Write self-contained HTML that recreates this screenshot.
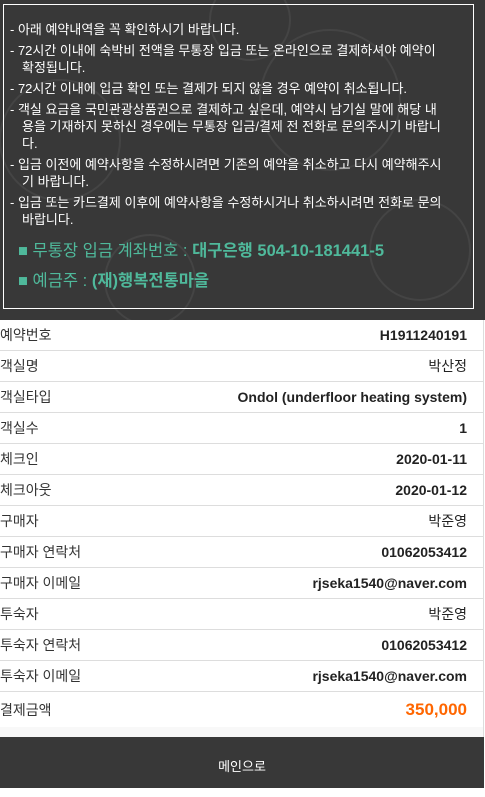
<!DOCTYPE html>
<html><head><meta charset="utf-8"><style>
*{margin:0;padding:0;box-sizing:border-box}
body{width:485px;height:788px;overflow:hidden;background:#fff;font-family:"Liberation Sans","Noto Sans CJK KR",sans-serif}
.top{position:absolute;left:0;top:0;width:485px;height:320px;background:#383838;overflow:hidden}
.box{position:absolute;left:3px;top:4px;width:471px;height:305px;border:1px solid #fff}
ul{list-style:none;position:absolute;left:10px;top:21px;width:436px;color:#fff;font-size:13px;line-height:17px}
li{padding-left:12px;text-indent:-12px;margin-bottom:4px}
.acc{position:absolute;left:18px;color:#4fb99b;font-size:16.5px}
.acc b{font-weight:bold}
.rows{position:absolute;left:0;top:320px;width:484px;border-right:1px solid #ddd}
.r{height:31px;border-bottom:1px solid #ddd;display:flex;justify-content:space-between;align-items:center;padding:0 16px 0 0;font-size:14px;color:#333}
.r b{font-weight:bold;font-size:14px;color:#222}
.r b.k{font-weight:normal}
.last{height:35px;border-bottom:none}
.last b{color:#f60;font-size:17px}
.gap{height:11px;background:#f8f8f8}
.btn{position:absolute;left:0;top:737px;width:484px;height:51px;background:#383838;color:#fff;font-size:13px;text-align:center;line-height:60px}
</style></head><body>
<div class="top">
<svg width="485" height="320" style="position:absolute;left:0;top:0" fill="none" stroke="#444" stroke-width="2">
<circle cx="60" cy="140" r="60"/><circle cx="330" cy="100" r="70"/><circle cx="420" cy="250" r="50"/><circle cx="150" cy="280" r="45"/><circle cx="250" cy="20" r="40"/>
</svg>
<div class="box"></div>
<ul>
<li>- 아래 예약내역을 꼭 확인하시기 바랍니다.</li>
<li>- 72시간 이내에 숙박비 전액을 무통장 입금 또는 온라인으로 결제하셔야 예약이 확정됩니다.</li>
<li>- 72시간 이내에 입금 확인 또는 결제가 되지 않을 경우 예약이 취소됩니다.</li>
<li>- 객실 요금을 국민관광상품권으로 결제하고 싶은데, 예약시 남기실 말에 해당 내용을 기재하지 못하신 경우에는 무통장 입금/결제 전 전화로 문의주시기 바랍니다.</li>
<li>- 입금 이전에 예약사항을 수정하시려면 기존의 예약을 취소하고 다시 예약해주시기 바랍니다.</li>
<li>- 입금 또는 카드결제 이후에 예약사항을 수정하시거나 취소하시려면 전화로 문의바랍니다.</li>
</ul>
<div class="acc" style="top:237px">■ 무통장 입금 계좌번호 : <b>대구은행 504-10-181441-5</b></div>
<div class="acc" style="top:267px">■ 예금주 : <b>(재)행복전통마을</b></div>
</div>
<div class="rows">
<div class="r"><span>예약번호</span><b>H1911240191</b></div>
<div class="r"><span>객실명</span><b class="k">박산정</b></div>
<div class="r"><span>객실타입</span><b>Ondol (underfloor heating system)</b></div>
<div class="r"><span>객실수</span><b>1</b></div>
<div class="r"><span>체크인</span><b>2020-01-11</b></div>
<div class="r"><span>체크아웃</span><b>2020-01-12</b></div>
<div class="r"><span>구매자</span><b class="k">박준영</b></div>
<div class="r"><span>구매자 연락처</span><b>01062053412</b></div>
<div class="r"><span>구매자 이메일</span><b>rjseka1540@naver.com</b></div>
<div class="r"><span>투숙자</span><b class="k">박준영</b></div>
<div class="r"><span>투숙자 연락처</span><b>01062053412</b></div>
<div class="r"><span>투숙자 이메일</span><b>rjseka1540@naver.com</b></div>
<div class="r last"><span>결제금액</span><b>350,000</b></div>
<div class="gap"></div>
</div>
<div class="btn">메인으로</div>
</body></html>
